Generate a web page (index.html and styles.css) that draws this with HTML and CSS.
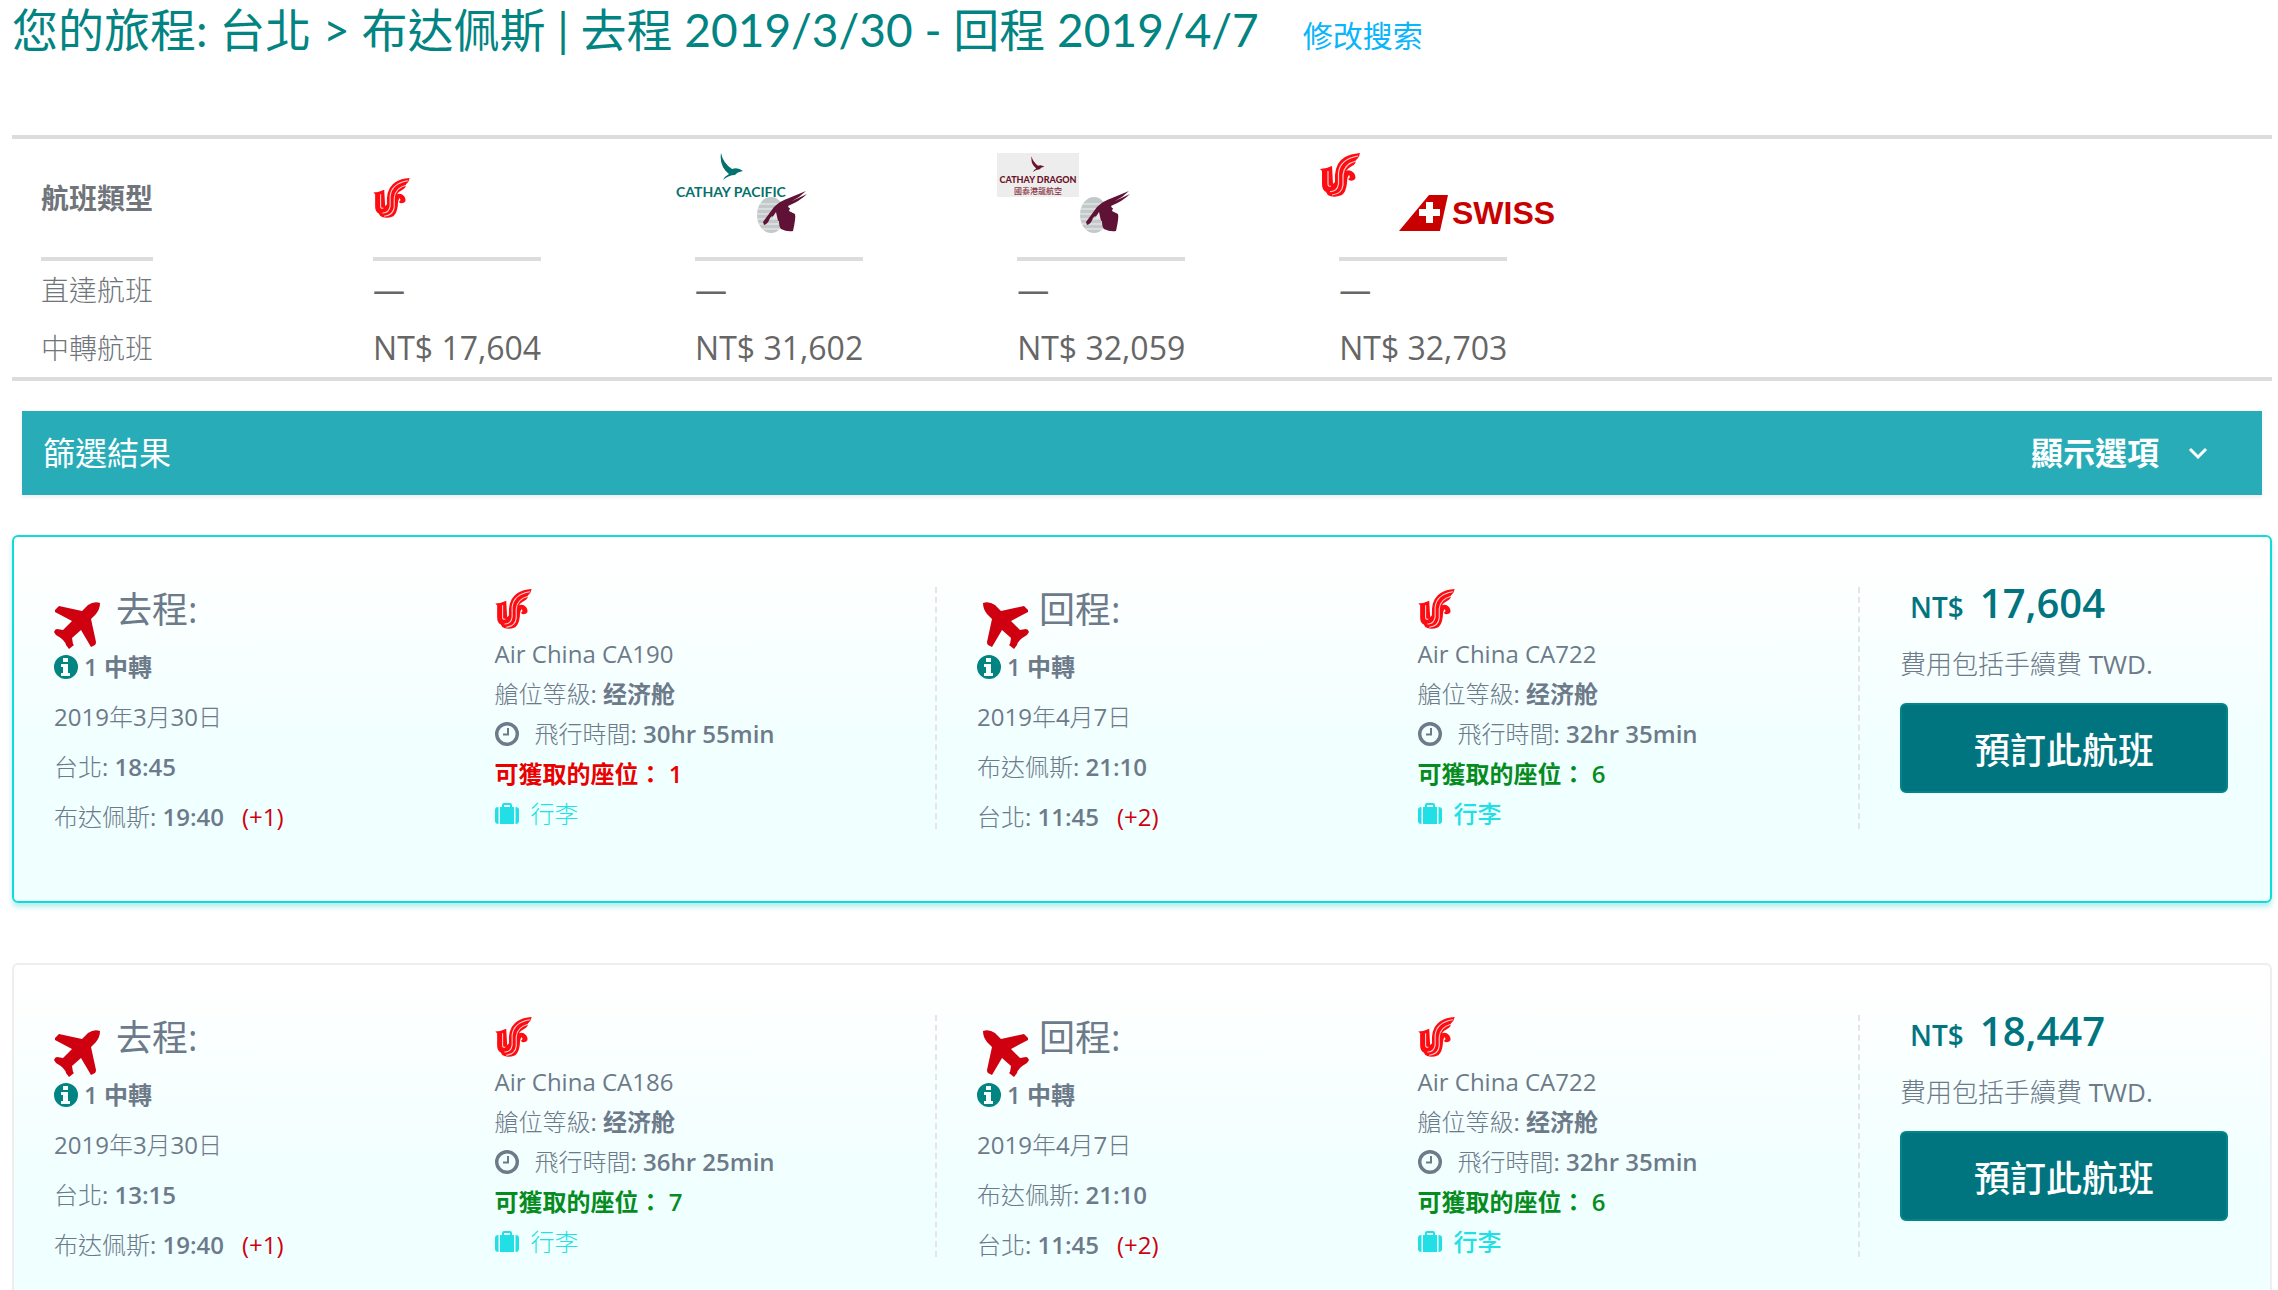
FILE: index.html
```html
<!DOCTYPE html>
<html lang="zh-Hant">
<head>
<meta charset="utf-8">
<title>航班搜索結果</title>
<link rel="stylesheet" href="styles.css">
</head>
<body>
<svg class="sprite" aria-hidden="true">
  <symbol id="plane" viewBox="0 0 52 47"><path d="M46 1Q46 7 42 12L37 17L42 40Q42 42 41 43L37 45L27 28L18 36L19 42L20 43L15 47L12 43Q11 38 2 33L0 30Q1 27 3 27L9 28L18 19L1 10V8L5 4L28 9L34 3Q40 -1 46 1z"/></symbol>
  <symbol id="info" viewBox="0 0 24 24"><path fill-rule="evenodd" d="M12 0a12 12 0 1 1 0 24a12 12 0 0 1 0-24zM9 3v4h5V3zM7 9v3h2v6H7v3h9v-3h-2V9z"/></symbol>
  <symbol id="clock" viewBox="0 0 24 24"><circle cx="12" cy="12" r="10.3" fill="none" stroke="currentColor" stroke-width="3.4"/><path d="M12 6h2v7.5H8v-2h4z"/></symbol>
  <symbol id="case" viewBox="0 0 24 22"><path fill-rule="evenodd" d="M5 4h2V2q0-2 2-2h6q2 0 2 2v2h2v17H5zM9 4h6V2H9zM3.500 4v17Q0 21 0 18V7Q0 4 3.500 4zM20.500 4v17Q24 21 24 18V7Q24 4 20.500 4z"/></symbol>
  <symbol id="airchina" viewBox="0 0 40 44">
    <path fill="#fd0d12" d="M0 16Q6 16 12 13L13 31L15 29V22Q16 9 25 4Q30 1 40 0Q39 5 36 7Q36 11 32 13Q28 15 26 18Q30 16 34 20Q37 25 34 27Q30 29 28 26Q31 25 29 22Q27 24 27 30Q26 39 22 42Q15 45 10 43Q7 42 6 39Q2 37 2 31V18z"/>
    <path fill="none" stroke="#ffd0d0" stroke-width="1.200" d="M8 18V31Q8 34 11 33M38 3Q20 6 18.500 20V31Q17 39 10 38.500M36 8Q24 11 23 22V32Q22 41 12 42"/>
  </symbol>
  <symbol id="bird" viewBox="0 0 24 28"><path d="M1 0Q3 10 12 16Q18 14 23 18Q17 19 15 22Q9 22 3 27Q5 23 9 21Q-1 13 1 0z"/></symbol>
  <symbol id="oryx" viewBox="0 0 52 44">
    <ellipse cx="15" cy="24" rx="14" ry="18" fill="#c3c9cb"/>
    <path stroke="#eef0f0" stroke-width="1" d="M3 13h24M1 18h24M1 23h24M1 28h24M3 33h24M6 38h20"/>
    <path fill="#5f1236" d="M7 31L18 16Q24 10 33 7L50 0Q44 6 36 10L51 3Q44 10 32 15L33 17H34L33 20L39 23Q40 27 37 40Q31 41 25 38Q23 36 23 30L20 29L16 25L14 27Q12 33 8 34z"/>
    <path fill="#e6e6e8" d="M20 21l-4 6l6 3z"/>
  </symbol>
</svg>

<header class="trip">
  <h1>您的旅程: 台北 &gt; 布达佩斯 | 去程 2019/3/30 - 回程 2019/4/7</h1>
  <a href="#search">修改搜索</a>
</header>

<main>
<table class="summary">
  <thead>
    <tr>
      <th scope="col"><div class="cap cap-label">航班類型</div></th>
      <th scope="col"><div class="cap"><svg class="carrier" role="img" aria-label="Air China"><use href="#airchina"/></svg></div></th>
      <th scope="col"><div class="cap"><svg class="pair" viewBox="0 0 242 80">
        <use href="#bird" x="47" y="0" width="24" height="28" fill="#04716c"/>
        <text class="cathay" x="3" y="44">CATHAY PACIFIC</text>
        <use href="#oryx" x="83" y="38" width="52" height="44"/>
      </svg></div></th>
      <th scope="col"><div class="cap"><svg class="pair" viewBox="0 0 242 80">
        <rect x="2" y="0" width="82" height="44" fill="#ededed"/>
        <use href="#bird" x="36" y="3" width="14" height="17" fill="#6b1328"/>
        <text class="dragon" x="43" y="30">CATHAY DRAGON</text>
        <text class="dragon-cn" x="43" y="41">國泰港龍航空</text>
        <use href="#oryx" x="84" y="38" width="52" height="44"/>
      </svg></div></th>
      <th scope="col"><div class="cap"><svg class="pair" viewBox="0 0 242 80">
        <use href="#airchina" x="3" y="0" width="40" height="44"/>
        <path fill="#c90000" d="M82 78L112 42H131L123 78z"/>
        <path fill="#fff" d="M109 49h7v7h7v7h-7v7h-7v-7h-7v-7h7z"/>
        <text class="swiss" x="135" y="71">SWISS</text>
      </svg></div></th>
      <td></td>
    </tr>
  </thead>
  <tbody>
    <tr><th scope="row">直達航班</th><td>—</td><td>—</td><td>—</td><td>—</td><td></td></tr>
    <tr><th scope="row">中轉航班</th><td>NT$ 17,604</td><td>NT$ 31,602</td><td>NT$ 32,059</td><td>NT$ 32,703</td><td></td></tr>
  </tbody>
</table>

<section class="filter">
  <h2>篩選結果</h2>
  <button type="button">顯示選項<svg viewBox="0 0 20 12"><path d="M2 2l8 8l8-8"/></svg></button>
</section>

<article class="offer selected">
  <section class="leg">
    <div class="route">
      <h3><svg class="plane"><use href="#plane"/></svg>去程:</h3>
      <ul>
        <li class="stops"><svg><use href="#info"/></svg>1 中轉</li>
        <li>2019年3月30日</li>
        <li>台北: <b>18:45</b></li>
        <li>布达佩斯: <b>19:40</b><span class="days">(+1)</span></li>
      </ul>
    </div>
    <div class="flight">
      <svg class="carrier" role="img" aria-label="Air China"><use href="#airchina"/></svg>
      <ul>
        <li>Air China CA190</li>
        <li>艙位等級: <b class="cabin">经济舱</b></li>
        <li><svg class="clock"><use href="#clock"/></svg>飛行時間: <b>30hr 55min</b></li>
        <li class="seats few">可獲取的座位： 1</li>
        <li><a href="#bags"><svg class="case"><use href="#case"/></svg>行李</a></li>
      </ul>
    </div>
  </section>
  <section class="leg">
    <div class="route">
      <h3><svg class="plane back"><use href="#plane"/></svg>回程:</h3>
      <ul>
        <li class="stops"><svg><use href="#info"/></svg>1 中轉</li>
        <li>2019年4月7日</li>
        <li>布达佩斯: <b>21:10</b></li>
        <li>台北: <b>11:45</b><span class="days">(+2)</span></li>
      </ul>
    </div>
    <div class="flight">
      <svg class="carrier" role="img" aria-label="Air China"><use href="#airchina"/></svg>
      <ul>
        <li>Air China CA722</li>
        <li>艙位等級: <b class="cabin">经济舱</b></li>
        <li><svg class="clock"><use href="#clock"/></svg>飛行時間: <b>32hr 35min</b></li>
        <li class="seats">可獲取的座位： 6</li>
        <li><a class="included" href="#bags"><svg class="case"><use href="#case"/></svg>行李</a></li>
      </ul>
    </div>
  </section>
  <section class="fare">
    <p class="price"><small>NT$</small>17,604</p>
    <p class="fee">費用包括手續費 TWD.</p>
    <button type="button">預訂此航班</button>
  </section>
</article>

<article class="offer">
  <section class="leg">
    <div class="route">
      <h3><svg class="plane"><use href="#plane"/></svg>去程:</h3>
      <ul>
        <li class="stops"><svg><use href="#info"/></svg>1 中轉</li>
        <li>2019年3月30日</li>
        <li>台北: <b>13:15</b></li>
        <li>布达佩斯: <b>19:40</b><span class="days">(+1)</span></li>
      </ul>
    </div>
    <div class="flight">
      <svg class="carrier" role="img" aria-label="Air China"><use href="#airchina"/></svg>
      <ul>
        <li>Air China CA186</li>
        <li>艙位等級: <b class="cabin">经济舱</b></li>
        <li><svg class="clock"><use href="#clock"/></svg>飛行時間: <b>36hr 25min</b></li>
        <li class="seats">可獲取的座位： 7</li>
        <li><a href="#bags"><svg class="case"><use href="#case"/></svg>行李</a></li>
      </ul>
    </div>
  </section>
  <section class="leg">
    <div class="route">
      <h3><svg class="plane back"><use href="#plane"/></svg>回程:</h3>
      <ul>
        <li class="stops"><svg><use href="#info"/></svg>1 中轉</li>
        <li>2019年4月7日</li>
        <li>布达佩斯: <b>21:10</b></li>
        <li>台北: <b>11:45</b><span class="days">(+2)</span></li>
      </ul>
    </div>
    <div class="flight">
      <svg class="carrier" role="img" aria-label="Air China"><use href="#airchina"/></svg>
      <ul>
        <li>Air China CA722</li>
        <li>艙位等級: <b class="cabin">经济舱</b></li>
        <li><svg class="clock"><use href="#clock"/></svg>飛行時間: <b>32hr 35min</b></li>
        <li class="seats">可獲取的座位： 6</li>
        <li><a class="included" href="#bags"><svg class="case"><use href="#case"/></svg>行李</a></li>
      </ul>
    </div>
  </section>
  <section class="fare">
    <p class="price"><small>NT$</small>18,447</p>
    <p class="fee">費用包括手續費 TWD.</p>
    <button type="button">預訂此航班</button>
  </section>
</article>
</main>
</body>
</html>
```
FILE: styles.css
```css
:root {
  --light: "Open Sans", "Noto Sans CJK TC Light", "Noto Sans CJK TC", sans-serif;
  --text: "Open Sans", "Noto Sans CJK TC", sans-serif;
}

* { box-sizing: border-box; }

body {
  margin: 0;
  padding: 0 6px 0 12px;
  background: #fff;
  color: #6c7a89;
  font: 400 24px/24px var(--light);
}

h1, h2, h3, p, ul { margin: 0; padding: 0; font-weight: 400; }
ul { list-style: none; }
a { text-decoration: none; }
svg { fill: currentColor; flex: none; }
button { font-family: var(--text); cursor: pointer; }
.sprite { display: none; }

.trip {
  display: flex;
  align-items: baseline;
  gap: 44px;
  min-height: 135px;
}
.trip h1 {
  color: #028482;
  font: 400 46px/60px Lato, "Noto Sans CJK TC", sans-serif;
}
.trip a {
  color: #0bb5fb;
  font: 400 30px/60px var(--text);
}

.summary {
  width: 100%;
  table-layout: fixed;
  border-collapse: separate;
  border-spacing: 0;
  border-top: 4px solid #dcdcdc;
  border-bottom: 4px solid #dcdcdc;
  color: #666;
  font-size: 32px;
}
.summary th, .summary td {
  width: 14.25%;
  height: 58px;
  padding: 0 0 0 39px;
  text-align: left;
  font-weight: 400;
  white-space: nowrap;
}
.summary th:first-child {
  padding-left: 29px;
  color: #6f757b;
  font-size: 28px;
}
.summary td:last-child { width: auto; }
.cap {
  display: flex;
  align-items: center;
  width: 168px;
  height: 122px;
  border-bottom: 4px solid #dcdcdc;
}
.summary .cap-label { width: 112px; font-family: var(--text); font-weight: 700; }
.carrier { display: block; width: 37px; height: 40px; }
.pair { width: 242px; height: 80px; margin: 0 0 10px -22px; overflow: visible; }
.cathay { font: 700 14px Lato, sans-serif; fill: #04716c; }
.dragon { font: 900 9px Lato, sans-serif; fill: #6b1328; text-anchor: middle; }
.dragon-cn { font: 500 8px "Noto Sans CJK TC", sans-serif; fill: #8a3345; text-anchor: middle; }
.swiss { font: 700 32px "Liberation Sans", sans-serif; fill: #c90000; }

.filter {
  display: flex;
  align-items: center;
  justify-content: space-between;
  height: 84px;
  margin: 30px 10px 40px;
  padding: 0 54px 0 21px;
  background: #28adb8;
  box-shadow: 0 2px 4px rgba(0, 0, 0, .08);
  color: #fff;
}
.filter h2 { font: 400 32px/40px var(--text); }
.filter button {
  display: flex;
  align-items: center;
  gap: 29px;
  padding: 0;
  border: 0;
  background: none;
  color: #fff;
  font-size: 32px;
  font-weight: 600;
  line-height: 40px;
}
.filter svg { width: 20px; height: 12px; fill: none; stroke: #fff; stroke-width: 3; }

.offer {
  display: grid;
  grid-template-columns: 1fr 1fr 328px;
  gap: 40px;
  margin-bottom: 60px;
  padding: 50px 42px 72px 40px;
  border: 2px solid #eee;
  border-radius: 6px;
  background: linear-gradient(#fff 5%, #f0ffff 62%);
}
.offer.selected {
  border-color: #0edcd8;
  box-shadow: 0 4px 5px rgba(14, 200, 200, .3);
}
.leg {
  display: grid;
  grid-template-columns: 1fr 1fr;
  border-right: 2px dashed #e5e5e5;
}

.route h3 {
  display: flex;
  height: 63px;
  gap: 10px;
  font: 400 36px/46px var(--text);
}
.plane { width: 52px; height: 47px; margin-top: 15px; color: #cf000f; }
.plane.back { transform: scaleX(-1); }
.route ul, .flight ul { display: flex; flex-direction: column; }
.route ul { margin-top: 5px; gap: 26px; }
.flight { padding-top: 2px; }
.flight ul { margin-top: 13px; gap: 16px; }
.route li, .flight li { display: flex; align-items: center; height: 24px; white-space: pre; }
.route b, .flight b { font-weight: 600; }
.stops { font-family: var(--text); font-weight: 600; }
.stops svg { width: 24px; height: 24px; margin-right: 6px; color: #028482; }
.days { margin-left: 18px; color: #cf000f; font-weight: 500; }
.flight .cabin { font-family: "Open Sans", "Noto Sans CJK SC", sans-serif; font-weight: 700; }
.clock { width: 24px; height: 24px; margin-right: 16px; }
.seats { color: #068c1e; font-family: var(--text); font-weight: 600; }
.seats.few { color: #eb0000; }
.flight a { display: flex; align-items: center; gap: 12px; color: #22dfe5; }
.flight .included { font-family: var(--text); font-weight: 500; }
.case { width: 24px; height: 22px; }

.price {
  padding-left: 10px;
  color: #01757f;
  font: 600 40px/32px var(--text);
}
.price small { margin-right: 16px; font-size: 28px; line-height: 24px; }
.fee { margin-top: 30px; font-size: 26px; line-height: 30px; }
.fare button {
  width: 100%;
  height: 90px;
  margin-top: 24px;
  border: 2px solid #02858d;
  border-radius: 6px;
  background: #01757f;
  color: #fff;
  font-size: 36px;
  font-weight: 500;
}
```
